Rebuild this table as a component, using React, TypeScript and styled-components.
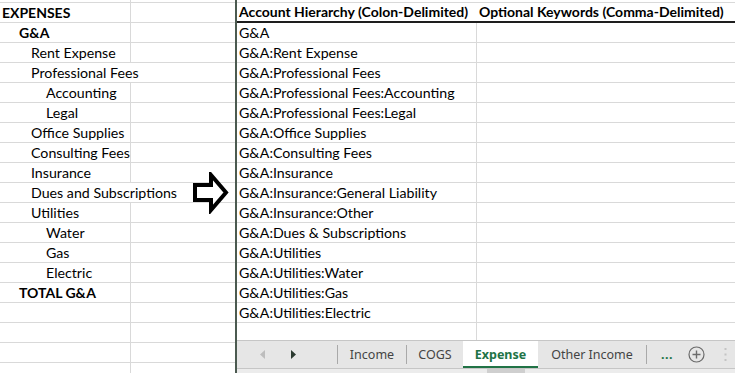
import React from "react";
import styled, { createGlobalStyle } from "styled-components";

const GlobalStyle = createGlobalStyle`
  html, body {
    margin: 0;
    padding: 0;
    background: #fff;
  }
  body {
    width: 735px;
    height: 373px;
    overflow: hidden;
    font-family: Lato, "Liberation Sans", sans-serif;
    color: #000;
  }
`;

const GRID = "#d9d9d9";
const GREEN = "#217346";

// indent in px for each outline level
const INDENT = [3, 20, 32, 47];

const Workbook = styled.div`
  display: flex;
  width: 735px;
  height: 373px;
  overflow: hidden;
`;

const LeftPane = styled.div`
  position: relative;
  width: 235px;
  flex: none;
  display: flex;
  flex-direction: column;
  overflow: hidden;
`;

const Split = styled.div`
  width: 2px;
  flex: none;
  background: #4b5a50;
`;

const RightPane = styled.div`
  flex: 1;
  min-width: 0;
  display: flex;
  flex-direction: column;
`;

const Sheet = styled.div`
  flex: 1;
  overflow: hidden;
  display: flex;
  flex-direction: column;
`;

const Row = styled.div<{ $cols: string; $h?: number; $head?: boolean }>`
  display: grid;
  grid-template-columns: ${(p) => p.$cols};
  height: ${(p) => p.$h ?? 20}px;
  flex: none;
  box-sizing: border-box;
  border-bottom: ${(p) => (p.$head ? "2px solid #1e1e1e" : `1px solid ${GRID}`)};
`;

const Cell = styled.div<{ $level?: number; $bold?: boolean; $spill?: boolean; $open?: boolean }>`
  position: relative;
  box-sizing: border-box;
  display: flex;
  align-items: flex-end;
  padding-left: ${(p) => INDENT[p.$level ?? 0] - 1}px;
  border-right: ${(p) => (p.$spill || p.$open ? "none" : `1px solid ${GRID}`)};
  font-size: ${(p) => (p.$bold ? 14 : 14.2)}px;
  line-height: 18px;
  font-weight: ${(p) => (p.$bold ? 700 : 400)};
  white-space: nowrap;
  overflow: visible;
  z-index: ${(p) => (p.$spill ? 1 : 0)};
`;

const ArrowMark = styled.svg`
  position: absolute;
  left: 190px;
  top: 172px;
  z-index: 2;
`;

const TabBar = styled.div`
  flex: none;
  height: 28px;
  box-sizing: border-box;
  border-top: 1px solid #c6c6c6;
  background: #e6e6e6;
  display: flex;
  align-items: stretch;
  font-family: "Noto Sans", "Open Sans", sans-serif;
  font-size: 12.5px;
  color: #444;
`;

const TabNav = styled.div`
  width: 100px;
  flex: none;
  display: flex;
  align-items: center;
  gap: 24px;
  padding-left: 23px;
  box-sizing: border-box;
`;

const Sep = styled.div`
  width: 1px;
  height: 19px;
  align-self: center;
  background: #a9a9a9;
  flex: none;
`;

const Tab = styled.div<{ $w: number; $active?: boolean }>`
  width: ${(p) => p.$w}px;
  flex: none;
  display: flex;
  align-items: center;
  justify-content: center;
  box-sizing: border-box;
  background: ${(p) => (p.$active ? "#fff" : "transparent")};
  color: ${(p) => (p.$active ? GREEN : "#444")};
  font-weight: ${(p) => (p.$active ? 700 : 400)};
  border-bottom: ${(p) => (p.$active ? `2px solid ${GREEN}` : "2px solid transparent")};
  padding-top: 2px;
`;

const More = styled.div`
  width: 28px;
  flex: none;
  display: flex;
  align-items: center;
  justify-content: center;
  color: ${GREEN};
  font-weight: 700;
  letter-spacing: 0.5px;
  padding-left: 6px;
`;

const IconSlot = styled.div<{ $w: number }>`
  width: ${(p) => p.$w}px;
  flex: none;
  display: flex;
  align-items: center;
  justify-content: center;
`;

const Footer = styled.div`
  flex: none;
  height: 4px;
  border-top: 1px solid #c6c6c6;
  background: #ececec;
  display: flex;
  padding-left: 250px;
`;

const Thumb = styled.div`
  width: 38px;
  background: #cfcfcf;
`;

type Item = { text: string; level: number; bold?: boolean; spill?: boolean };

const outline: Item[] = [
  { text: "EXPENSES", level: 0, bold: true },
  { text: "G&A", level: 1, bold: true },
  { text: "Rent Expense", level: 2 },
  { text: "Professional Fees", level: 2, spill: true },
  { text: "Accounting", level: 3 },
  { text: "Legal", level: 3 },
  { text: "Office Supplies", level: 2 },
  { text: "Consulting Fees", level: 2 },
  { text: "Insurance", level: 2 },
  { text: "Dues and Subscriptions", level: 2, spill: true },
  { text: "Utilities", level: 2 },
  { text: "Water", level: 3 },
  { text: "Gas", level: 3 },
  { text: "Electric", level: 3 },
  { text: "TOTAL G&A", level: 1, bold: true },
  { text: "", level: 0 },
  { text: "", level: 0 },
  { text: "", level: 0 },
  { text: "", level: 0 },
];

const accounts = [
  "G&A",
  "G&A:Rent Expense",
  "G&A:Professional Fees",
  "G&A:Professional Fees:Accounting",
  "G&A:Professional Fees:Legal",
  "G&A:Office Supplies",
  "G&A:Consulting Fees",
  "G&A:Insurance",
  "G&A:Insurance:General Liability",
  "G&A:Insurance:Other",
  "G&A:Dues & Subscriptions",
  "G&A:Utilities",
  "G&A:Utilities:Water",
  "G&A:Utilities:Gas",
  "G&A:Utilities:Electric",
  "",
];

const LEFT_COLS = "131px 1fr";
const RIGHT_COLS = "240px 1fr";

export default function App() {
  return (
    <>
      <GlobalStyle />
      <Workbook>
        <LeftPane>
          <Row $cols={LEFT_COLS} $h={3}>
            <Cell />
            <Cell $open />
          </Row>
          {outline.map((item, i) => (
            <Row key={i} $cols={LEFT_COLS}>
              <Cell $level={item.level} $bold={item.bold} $spill={item.spill}>
                {item.text}
              </Cell>
              <Cell $open />
            </Row>
          ))}
          <ArrowMark width="40" height="42" viewBox="0 0 40 42">
            <polygon
              points="5,13 21,13 21,3 36,20.5 21,38 21,28 5,28"
              fill="#fff"
              stroke="#000"
              strokeWidth="4"
              strokeLinejoin="miter"
            />
          </ArrowMark>
        </LeftPane>
        <Split />
        <RightPane>
          <Sheet>
            <Row $cols={RIGHT_COLS} $h={3}>
              <Cell $open />
              <Cell $open />
            </Row>
            <Row $cols={RIGHT_COLS} $head>
              <Cell $bold $open>
                Account Hierarchy (Colon-Delimited)
              </Cell>
              <Cell $bold $open>
                Optional Keywords (Comma-Delimited)
              </Cell>
            </Row>
            {accounts.map((name, i) => (
              <Row key={i} $cols={RIGHT_COLS}>
                <Cell>{name}</Cell>
                <Cell $open />
              </Row>
            ))}
          </Sheet>
          <TabBar>
            <TabNav>
              <svg width="6" height="9" viewBox="0 0 6 9">
                <polygon points="5,0 5,9 0,4.5" fill="#bdbdbd" />
              </svg>
              <svg width="6" height="9" viewBox="0 0 6 9">
                <polygon points="1,0 1,9 6,4.5" fill="#2b3a30" />
              </svg>
            </TabNav>
            <Sep />
            <Tab $w={68}>Income</Tab>
            <Sep />
            <Tab $w={56}>COGS</Tab>
            <Tab $w={75} $active>
              Expense
            </Tab>
            <Tab $w={108}>Other Income</Tab>
            <Sep />
            <More>...</More>
            <IconSlot $w={30}>
              <svg width="17" height="17" viewBox="0 0 17 17">
                <circle cx="8.5" cy="8.5" r="7.5" fill="none" stroke="#6b6b6b" strokeWidth="1.2" />
                <path d="M8.5 4.5v8M4.5 8.5h8" stroke="#6b6b6b" strokeWidth="1.4" />
              </svg>
            </IconSlot>
            <IconSlot $w={28}>
              <svg width="3" height="13" viewBox="0 0 3 13">
                <rect x="0.5" y="0" width="2" height="2" fill="#c4c4c4" />
                <rect x="0.5" y="5.5" width="2" height="2" fill="#c4c4c4" />
                <rect x="0.5" y="11" width="2" height="2" fill="#c4c4c4" />
              </svg>
            </IconSlot>
          </TabBar>
          <Footer>
            <Thumb />
          </Footer>
        </RightPane>
      </Workbook>
    </>
  );
}
